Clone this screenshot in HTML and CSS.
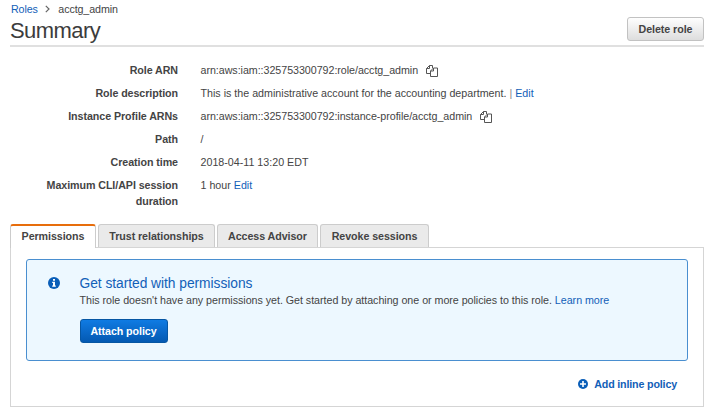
FILE: index.html
```html
<!DOCTYPE html>
<html lang="en">
<head>
<meta charset="utf-8">
<title>acctg_admin</title>
<link rel="stylesheet" href="styles.css">
</head>
<body>
<nav class="crumbs"><a>Roles</a><svg class="chevron" viewBox="0 0 5 8"><path d="M.8.8 4 4 .8 7.200"/></svg><span>acctg_admin</span></nav>
<header class="header"><h1>Summary</h1><button class="btn">Delete role</button></header>
<dl class="details">
<dt>Role ARN</dt><dd><span class="arn">arn:aws:iam::325753300792:role/acctg_admin</span><svg class="copy" viewBox="0 0 12 12"><path d="M4.500 8.500H.5V3.500L3.500.5H6.500V3M3.500.5V3.500H.5M7.500 3H11.500V11.500H4.500V6ZM7.500 3V6H4.500"/></svg></dd>
<dt>Role description</dt><dd><span class="desc">This is the administrative account for the accounting department.</span> <span class="bar">|</span> <a>Edit</a></dd>
<dt>Instance Profile ARNs</dt><dd><span class="arn">arn:aws:iam::325753300792:instance-profile/acctg_admin</span><svg class="copy" viewBox="0 0 12 12"><path d="M4.500 8.500H.5V3.500L3.500.5H6.500V3M3.500.5V3.500H.5M7.500 3H11.500V11.500H4.500V6ZM7.500 3V6H4.500"/></svg></dd>
<dt>Path</dt><dd>/</dd>
<dt>Creation time</dt><dd>2018-04-11 13:20 EDT</dd>
<dt>Maximum CLI/API session duration</dt><dd>1 hour <a>Edit</a></dd>
</dl>
<div class="tabs">
<div class="tab active">Permissions</div><div class="tab trust">Trust relationships</div><div class="tab advisor">Access Advisor</div><div class="tab revoke">Revoke sessions</div>
</div>
<main class="panel">
<section class="notice">
<svg class="info" viewBox="0 0 12 12"><circle cx="6" cy="6" r="6"/><path d="M5 2h2v1.700H5zM4.200 4.700H7V8.500h.8v1.200H4.200V8.500H5V5.900h-.8z"/></svg>
<div><h2>Get started with permissions</h2><p>This role doesn't have any permissions yet. Get started by attaching one or more policies to this role. <a>Learn more</a></p><button class="btn primary">Attach policy</button></div>
</section>
<div class="inline-policy"><svg class="plus" viewBox="0 0 10 10"><circle cx="5" cy="5" r="5"/><path d="M4.200 2h1.600v2.200H8v1.600H5.800V8H4.200V5.800H2V4.200h2.200z"/></svg><a>Add inline policy</a></div>
</main>
</body>
</html>
```

FILE: styles.css
```css
* { box-sizing: border-box; }
body { margin: 0; padding: 1px 8px 0 10px; background: #fff; color: #444; font: 10.7px/16px "Liberation Sans", Arial, sans-serif; }
a { color: #1260b8; }
h1, h2, p, dl, dd { margin: 0; font-weight: normal; }
.crumbs { display: flex; align-items: center; height: 16px; padding-left: 1px; letter-spacing: -.1px; }
.chevron { width: 5px; height: 8px; margin: 0 8.500px 0 7px; fill: none; stroke: #666; stroke-width: 1.2; }
.header { display: flex; justify-content: space-between; height: 30px; border-bottom: 2px solid #e0e0e0; }
h1 { font-size: 22px; line-height: 27px; letter-spacing: -.55px; color: #3c3c3c; white-space: nowrap; }
.btn { width: 77px; height: 24px; padding: 0; border: 1px solid #c2c2c2; border-radius: 3px; background: linear-gradient(#fefefe, #ddd); color: #444; font: bold 10.7px/20px "Liberation Sans", Arial, sans-serif; letter-spacing: -.07px; white-space: nowrap; }
.details { display: grid; grid-template-columns: 168px 1fr; column-gap: 22.5px; row-gap: 7.100px; padding-top: 15px; height: 177px; align-content: start; }
dt { text-align: right; font-weight: bold; letter-spacing: -.07px; }
dd { white-space: nowrap; height: 16px; }
.arn { letter-spacing: -.04px; }
.copy { width: 12px; height: 12px; margin-left: 8px; vertical-align: -3px; fill: none; stroke: #555; stroke-width: 1; }
.bar { color: #888; }
.tabs { display: flex; gap: 2px; height: 23px; }
.tab { height: 23px; border: 1px solid #ccc; border-bottom: 0; border-radius: 3px 3px 0 0; background: #eaeaea; font-weight: bold; letter-spacing: -.07px; line-height: 23px; text-align: center; white-space: nowrap; }
.active { width: 86px; height: 24px; border-top: 2px solid #e76d0c; background: #fff; line-height: 21px; position: relative; }
.trust { width: 117px; }
.advisor { width: 101px; }
.revoke { width: 109px; }
.panel { height: 160px; padding: 11px 15px; border: 1px solid #d5d5d5; }
.notice { display: flex; height: 102px; padding: 15px 21px; border: 1px solid #4a8fd0; border-radius: 3px; background: #edf8ff; }
.info { width: 12px; height: 12px; margin: 2px 19.500px 0 0; flex: none; }
circle { fill: #0a5eb8; }
circle + path { fill: #fff; }
h2 { font-size: 13.8px; line-height: 17px; letter-spacing: -.04px; color: #1260b8; }
.notice p { line-height: 16px; letter-spacing: -.03px; white-space: nowrap; }
.notice .btn { display: block; width: 88px; margin-top: 11px; }
.primary { border-color: #0656a3; background: linear-gradient(#107be3, #0459b2); color: #fff; }
.inline-policy { display: flex; align-items: center; justify-content: flex-end; gap: 6px; height: 16px; margin: 15px 11px 0 0; font-weight: bold; letter-spacing: -.16px; }
.plus { width: 10px; height: 10px; }
```
